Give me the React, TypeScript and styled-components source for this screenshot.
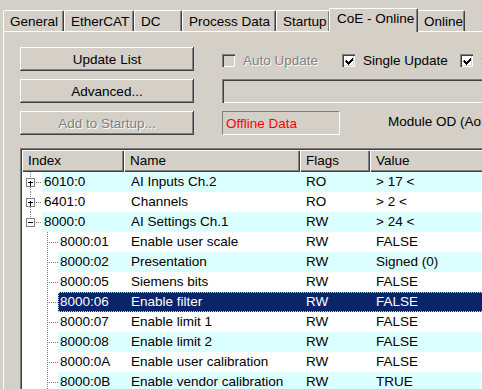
import React from 'react';
import styled, { createGlobalStyle } from 'styled-components';

const FACE = '#d4d0c8';

interface Entry {
  index: string;
  name: string;
  flags: string;
  value: string;
  level: number;
  toggle?: '+' | '-';
  last?: boolean;
  selected?: boolean;
}

const entries: Entry[] = [
  { index: '6010:0', name: 'AI Inputs Ch.2', flags: 'RO', value: '> 17 <', level: 0, toggle: '+' },
  { index: '6401:0', name: 'Channels', flags: 'RO', value: '> 2 <', level: 0, toggle: '+' },
  { index: '8000:0', name: 'AI Settings Ch.1', flags: 'RW', value: '> 24 <', level: 0, toggle: '-', last: true },
  { index: '8000:01', name: 'Enable user scale', flags: 'RW', value: 'FALSE', level: 1 },
  { index: '8000:02', name: 'Presentation', flags: 'RW', value: 'Signed (0)', level: 1 },
  { index: '8000:05', name: 'Siemens bits', flags: 'RW', value: 'FALSE', level: 1 },
  { index: '8000:06', name: 'Enable filter', flags: 'RW', value: 'FALSE', level: 1, selected: true },
  { index: '8000:07', name: 'Enable limit 1', flags: 'RW', value: 'FALSE', level: 1 },
  { index: '8000:08', name: 'Enable limit 2', flags: 'RW', value: 'FALSE', level: 1 },
  { index: '8000:0A', name: 'Enable user calibration', flags: 'RW', value: 'FALSE', level: 1 },
  { index: '8000:0B', name: 'Enable vendor calibration', flags: 'RW', value: 'TRUE', level: 1 },
];

const tabs = [
  { label: 'General', w: 61 },
  { label: 'EtherCAT', w: 70 },
  { label: 'DC', w: 48 },
  { label: 'Process Data', w: 94 },
  { label: 'Startup', w: 54 },
  { label: 'CoE - Online', w: 89, active: true },
  { label: 'Online', w: 48 },
];

const INDEX_W = 102;

const TreeGutter: React.FC<{ entry: Entry; width: number }> = ({ entry, width }) => {
  const dot = { stroke: '#808080', strokeDasharray: '1 1', shapeRendering: 'crispEdges' as const };
  if (entry.level === 0) {
    return (
      <svg width={width} height={20}>
        <line x1={8.5} y1={0} x2={8.5} y2={6} {...dot} />
        {!entry.last && <line x1={8.5} y1={15} x2={8.5} y2={20} {...dot} />}
        <line x1={14} y1={10.5} x2={20} y2={10.5} {...dot} />
        <rect x={4.5} y={6.5} width={8} height={8} fill="#fff" stroke="#808080" shapeRendering="crispEdges" />
        <path d="M6 10.5H11" stroke="#000" shapeRendering="crispEdges" />
        {entry.toggle === '+' && <path d="M8.5 8.5V13.5" stroke="#000" shapeRendering="crispEdges" />}
      </svg>
    );
  }
  return (
    <svg width={width} height={20}>
      <line x1={25.5} y1={0} x2={25.5} y2={20} {...dot} />
      <line x1={27} y1={10.5} x2={36} y2={10.5} {...dot} />
    </svg>
  );
};

const CheckMark = () => (
  <svg width={9} height={9} viewBox="0 0 9 9">
    <path d="M1 3h1v1h1v1h1v-1h1v-1h1v-1h1v-1h1v3h-1v1h-1v1h-1v1h-1v1h-1v-1h-1v-1h-1v-1h-1z" fill="#000" />
  </svg>
);

const App: React.FC = () => {
  return (
    <Window>
      <GlobalStyle />
      <TabStrip>
        {tabs.map((t) => (
          <Tab key={t.label} $w={t.w} $active={!!t.active}>
            {t.label}
          </Tab>
        ))}
      </TabStrip>
      <Panel>
        <Controls>
          <Button>Update List</Button>
          <CheckRow>
            <CheckItem $w={120}>
              <CheckBox $disabled />
              <CheckLabel $disabled>Auto Update</CheckLabel>
            </CheckItem>
            <CheckItem $w={118}>
              <CheckBox>
                <CheckMark />
              </CheckBox>
              <CheckLabel>Single Update</CheckLabel>
            </CheckItem>
            <CheckItem $w={120}>
              <CheckBox>
                <CheckMark />
              </CheckBox>
              <CheckLabel>Show Offline Data</CheckLabel>
            </CheckItem>
          </CheckRow>
          <Button>Advanced...</Button>
          <SunkenField />
          <Button disabled>Add to Startup...</Button>
          <InfoRow>
            <StatusBox>Offline Data</StatusBox>
            <InfoText>Module OD (AoE port):</InfoText>
          </InfoRow>
        </Controls>
        <ListOuter>
          <ListInner>
            <HeaderRow>
              <HeaderCell>Index</HeaderCell>
              <HeaderCell>Name</HeaderCell>
              <HeaderCell>Flags</HeaderCell>
              <HeaderCell>Value</HeaderCell>
            </HeaderRow>
            {entries.map((e, i) => {
              const gutter = e.level === 0 ? 20 : 36;
              return (
                <Row key={e.index}>
                  <TreeGutter entry={e} width={gutter} />
                  <Cells $indexW={INDEX_W - gutter} $alt={i % 2 === 0} $selected={!!e.selected}>
                    <IndexCell>{e.index}</IndexCell>
                    <NameCell>{e.name}</NameCell>
                    <Cell>{e.flags}</Cell>
                    <Cell>{e.value}</Cell>
                  </Cells>
                </Row>
              );
            })}
          </ListInner>
        </ListOuter>
      </Panel>
    </Window>
  );
};

export default App;

const GlobalStyle = createGlobalStyle`
  html, body {
    margin: 0;
    padding: 0;
    background: ${FACE};
  }
  body {
    font-family: "Liberation Sans", Arial, sans-serif;
    font-size: 13.5px;
    color: #000;
  }
  #root {
    width: 482px;
    height: 389px;
    overflow: hidden;
  }
`;

const Window = styled.div`
  width: 482px;
  height: 389px;
  overflow: hidden;
  background: ${FACE};
`;

const TabStrip = styled.div`
  display: flex;
  align-items: flex-end;
  height: 31px;
  padding-left: 3px;
  position: relative;
  z-index: 1;
`;

const Tab = styled.div<{ $w: number; $active: boolean }>`
  flex: none;
  box-sizing: border-box;
  width: ${({ $w }) => $w}px;
  height: ${({ $active }) => ($active ? 24 : 21)}px;
  margin: 0 ${({ $active }) => ($active ? '-1px' : '0')};
  margin-bottom: ${({ $active }) => ($active ? '-1px' : '0')};
  position: relative;
  z-index: ${({ $active }) => ($active ? 2 : 1)};
  border-top: 1px solid #fff;
  border-left: 1px solid #fff;
  border-right: 1px solid #404040;
  border-radius: 2px 2px 0 0;
  box-shadow: inset -1px 0 #808080;
  background: ${FACE};
  padding-left: ${({ $active }) => ($active ? 7 : 6)}px;
  line-height: ${({ $active }) => ($active ? 19 : 21)}px;
  white-space: nowrap;
  overflow: hidden;
`;

const Panel = styled.div`
  margin-left: 3px;
  width: 640px;
  height: 358px;
  box-sizing: border-box;
  border-top: 1px solid #fff;
  border-left: 1px solid #fff;
  padding: 15px 0 0 16px;
`;

const Controls = styled.div`
  display: grid;
  grid-template-columns: 174px 1fr;
  grid-auto-rows: 24px;
  column-gap: 28px;
  row-gap: 8px;
`;

const Button = styled.button`
  font-family: inherit;
  font-size: 13.5px;
  height: 24px;
  padding: 0;
  border: none;
  background: ${FACE};
  color: #000;
  box-shadow: inset -1px -1px #404040, inset 1px 1px #fff, inset -2px -2px #808080;
  &:disabled {
    color: #808080;
    text-shadow: 1px 1px #fff;
  }
`;

const CheckRow = styled.div`
  display: flex;
  align-items: center;
  white-space: nowrap;
  padding-top: 3px;
`;

const CheckItem = styled.div<{ $w: number }>`
  flex: none;
  width: ${({ $w }) => $w}px;
  display: flex;
  align-items: center;
  gap: 8px;
`;

const CheckBox = styled.span<{ $disabled?: boolean }>`
  flex: none;
  width: 13px;
  height: 13px;
  box-sizing: border-box;
  display: flex;
  align-items: center;
  justify-content: center;
  background: ${({ $disabled }) => ($disabled ? FACE : '#fff')};
  box-shadow: inset 1px 1px #808080, inset 2px 2px #404040, inset -1px -1px #fff,
    inset -2px -2px ${FACE};
  svg {
    margin: 1px 0 0 1px;
  }
`;

const CheckLabel = styled.span<{ $disabled?: boolean }>`
  color: ${({ $disabled }) => ($disabled ? '#808080' : '#000')};
  text-shadow: ${({ $disabled }) => ($disabled ? '1px 1px #fff' : 'none')};
`;

const SunkenField = styled.div`
  width: 320px;
  box-shadow: inset 1px 1px #808080, inset 2px 2px #404040, inset -1px -1px #fff,
    inset -2px -2px ${FACE};
`;

const InfoRow = styled.div`
  display: flex;
  align-items: center;
  white-space: nowrap;
`;

const StatusBox = styled.div`
  flex: none;
  width: 118px;
  height: 24px;
  box-sizing: border-box;
  border: 1px solid;
  border-color: #808080 #fff #fff #808080;
  color: #ff0000;
  padding-left: 3px;
  line-height: 23px;
`;

const InfoText = styled.span`
  margin-left: 48px;
  margin-top: -3px;
`;

const ListOuter = styled.div`
  margin-top: 13px;
  width: 600px;
  height: 260px;
  border: 1px solid;
  border-color: #808080 #fff #fff #808080;
`;

const ListInner = styled.div`
  height: 100%;
  border: 1px solid;
  border-color: #404040 ${FACE} ${FACE} #404040;
  background: #fff;
`;

const HeaderRow = styled.div`
  display: grid;
  grid-template-columns: ${INDEX_W}px 176px 70px 1fr;
  height: 22px;
`;

const HeaderCell = styled.div`
  background: ${FACE};
  box-shadow: inset 1px 1px #fff, inset -1px -1px #404040, inset -2px -2px #808080;
  padding-left: 6px;
  line-height: 22px;
`;

const Row = styled.div`
  display: flex;
  height: 20px;
  svg {
    flex: none;
    display: block;
  }
`;

const Cells = styled.div<{ $indexW: number; $alt: boolean; $selected: boolean }>`
  flex: 1;
  display: grid;
  grid-template-columns: ${({ $indexW }) => $indexW}px 176px 70px 1fr;
  line-height: 20px;
  white-space: nowrap;
  background: ${({ $alt, $selected }) => ($selected ? '#0a246a' : $alt ? '#dcffff' : '#fff')};
  color: ${({ $selected }) => ($selected ? '#fff' : '#000')};
  outline: ${({ $selected }) => ($selected ? '1px dotted #e8d090' : 'none')};
  outline-offset: -1px;
`;

const IndexCell = styled.span`
  padding-left: 2px;
`;

const NameCell = styled.span`
  padding-left: 7px;
`;

const Cell = styled.span`
  padding-left: 6px;
`;
